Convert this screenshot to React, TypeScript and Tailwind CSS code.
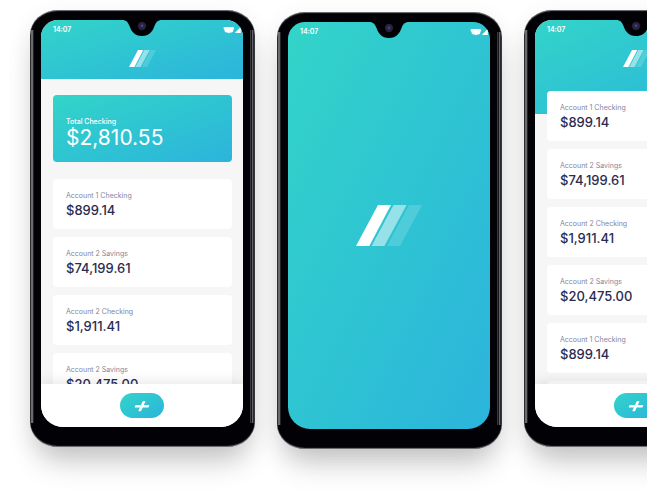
import type { ReactNode } from "react";

type Account = { id: number; name: string; balance: string };

const overviewAccounts: Account[] = [
  { id: 1, name: "Account 1 Checking", balance: "$899.14" },
  { id: 2, name: "Account 2 Savings", balance: "$74,199.61" },
  { id: 3, name: "Account 2 Checking", balance: "$1,911.41" },
  { id: 4, name: "Account 2 Savings", balance: "$20,475.00" },
];

const allAccounts: Account[] = [
  ...overviewAccounts,
  { id: 5, name: "Account 1 Checking", balance: "$899.14" },
];

function Logo({ className }: { className: string }) {
  return (
    <svg viewBox="0 0 66 41" className={className} fill="#fff" aria-hidden="true">
      <path d="M0 41 22 0H35L13.3 41Z" />
      <path d="M15.6 41 37.5 0H50.6L28.4 41Z" opacity="0.5" />
      <path d="M31 41 53 0H66L44 41Z" opacity="0.16" />
    </svg>
  );
}

function Notch() {
  return (
    <svg
      viewBox="0 0 40 17"
      className="absolute left-1/2 top-0 h-[17px] w-10 -translate-x-1/2"
      aria-hidden="true"
    >
      <path
        d="M0 0C4.500 0 6 2.200 7.500 6C9.500 11.500 12.500 16 20 16C27.500 16 30.500 11.500 32.500 6C34 2.200 35.500 0 40 0Z"
        fill="#020206"
      />
      <circle cx="20" cy="6" r="4.200" fill="#24222b" />
      <circle cx="20" cy="6" r="2.800" fill="#2b2450" />
      <circle cx="20" cy="5.800" r="1.200" fill="#4b408a" />
    </svg>
  );
}

function StatusBar() {
  return (
    <div className="flex h-5 items-center justify-between pl-3 pr-[2px] text-[7px] font-semibold text-white">
      <span className="leading-[8px]">14:07</span>
      <svg viewBox="0 0 18 8" className="h-2 w-[18px]" fill="#fff" aria-hidden="true">
        <path d="M1.500 1H9.500L11 1.500V3L10.200 4V5.600L8.800 6.600H7L6 7.600 5 6.600H3L1.600 5.600V4L.6 3V1.500Z" />
        <path d="M17.800 .8V7H11.900Z" />
      </svg>
    </div>
  );
}

function Phone({ children, className = "" }: { children: ReactNode; className?: string }) {
  return (
    <section
      className={`w-[225px] shrink-0 rounded-[28px/25px] bg-[#020206] bg-[linear-gradient(to_right,#1c1c1f_1px,#6a6b6e_1px,#6a6b6e_3px,#242427_3px,#242427_4px,#020206_4px,#020206_220px,#38383c_220px,#38383c_221px,#17171a_221px,#17171a_222px,#626267_222px,#626267_223px,#2a2a2e_223px)] bg-[length:100%_393px] bg-[position:0_20px] bg-no-repeat pb-5 pl-[11px] pr-3 pt-[10px] shadow-[inset_0_1px_1px_#77777b,inset_0_-1px_1px_#77777b,0_22px_30px_-8px_rgba(0,0,0,0.2),0_6px_24px_rgba(0,0,0,0.08)] ${className}`}
    >
      <div className="relative flex h-[407px] flex-col overflow-hidden rounded-t-[17px] rounded-b-[22px] bg-[#f6f6f6]">
        {children}
        <Notch />
      </div>
    </section>
  );
}

function AccountCard({ account }: { account: Account }) {
  return (
    <li className="h-[50px] shrink-0 rounded bg-white px-[13px] pt-3">
      <p className="text-[7px] leading-[10px] text-[#84849a]">{account.name}</p>
      <p className="text-[13px] font-medium leading-[18px] text-[#2b2b50]">{account.balance}</p>
    </li>
  );
}

function AccountList({ accounts }: { accounts: Account[] }) {
  return (
    <ul className="flex flex-col gap-2">
      {accounts.map((account) => (
        <AccountCard key={account.id} account={account} />
      ))}
    </ul>
  );
}

function BottomBar() {
  return (
    <nav className="relative flex h-[43px] shrink-0 items-center justify-center bg-white shadow-[0_-2px_12px_rgba(0,0,0,0.1)]">
      <button
        type="button"
        aria-label="Add"
        className="flex h-[25px] w-11 items-center justify-center rounded-full bg-linear-to-br from-[#33d4c8] to-[#2cb4dc]"
      >
        <svg viewBox="0 0 16 12" className="h-3 w-4" fill="#fff" aria-hidden="true">
          <path d="M2.200 4.900H14.800Q15.500 4.900 15.200 5.600L14.700 6.900Q14.400 7.500 13.700 7.500H1.200Q.5 7.500.8 6.800L1.300 5.500Q1.600 4.900 2.200 4.900Z" />
          <path d="M9.500 1H10.900Q11.700 1 11.300 1.800L7.300 10.500Q7 11.200 6.300 11.200H4.900Q4.100 11.200 4.500 10.400L8.500 1.700Q8.800 1 9.500 1Z" />
        </svg>
      </button>
    </nav>
  );
}

export default function App() {
  return (
    <main className="flex min-h-screen items-start gap-[22px] overflow-hidden bg-white pl-[30px] pt-[10px] font-['Inter','Liberation_Sans',sans-serif]">
      <Phone>
        <header className="h-[59px] shrink-0 bg-linear-to-br from-[#33d4c8] to-[#2cb4dc]">
          <StatusBar />
          <Logo className="mx-auto mt-[10px] h-[17px] w-[27px]" />
        </header>
        <div className="min-h-0 flex-1 overflow-hidden pl-3 pr-[11px] pt-4">
          <div className="mb-[17px] h-[67px] rounded bg-linear-to-br from-[#33d4c8] to-[#2cb4dc] px-[13px] pt-[22px] text-white">
            <p className="text-[7px] font-medium leading-[10px]">Total Checking</p>
            <p className="text-[21px] leading-[22px]">$2,810.55</p>
          </div>
          <AccountList accounts={overviewAccounts} />
        </div>
        <BottomBar />
      </Phone>

      <Phone className="mt-[2px]">
        <div className="flex flex-1 flex-col bg-linear-to-br from-[#33d4c8] to-[#2cb4dc]">
          <StatusBar />
          <div className="flex flex-1 items-center justify-center pb-5">
            <Logo className="h-[41px] w-[66px]" />
          </div>
        </div>
      </Phone>

      <Phone>
        <header className="h-[94px] shrink-0 bg-linear-to-br from-[#33d4c8] to-[#2cb4dc]">
          <StatusBar />
          <Logo className="mx-auto mt-[10px] h-[17px] w-[27px]" />
        </header>
        <div className="-mt-[23px] min-h-0 flex-1 overflow-hidden pl-3 pr-[11px]">
          <AccountList accounts={allAccounts} />
          <div className="mt-2 h-[50px] rounded bg-white" />
        </div>
        <BottomBar />
      </Phone>
    </main>
  );
}
